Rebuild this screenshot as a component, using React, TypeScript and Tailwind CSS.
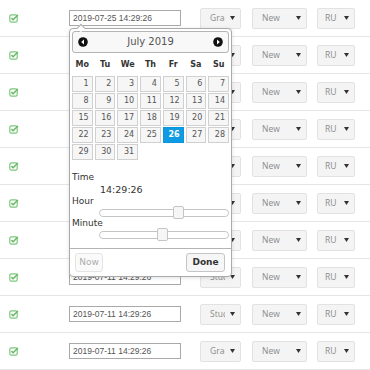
import React from "react";

type Row = { date: string; level: string };

const rows: Row[] = [
  { date: "2019-07-25 14:29:26", level: "Graduate" },
  { date: "2019-07-18 14:29:26", level: "Graduate" },
  { date: "2019-07-18 14:29:26", level: "Student" },
  { date: "2019-07-15 14:29:26", level: "Graduate" },
  { date: "2019-07-15 14:29:26", level: "Student" },
  { date: "2019-07-11 14:29:26", level: "Graduate" },
  { date: "2019-07-11 14:29:26", level: "Student" },
  { date: "2019-07-11 14:29:26", level: "Student" },
  { date: "2019-07-11 14:29:26", level: "Student" },
  { date: "2019-07-11 14:29:26", level: "Graduate" },
];

const weeks: (number | null)[][] = [
  [1, 2, 3, 4, 5, 6, 7],
  [8, 9, 10, 11, 12, 13, 14],
  [15, 16, 17, 18, 19, 20, 21],
  [22, 23, 24, 25, 26, 27, 28],
  [29, 30, 31, null, null, null, null],
];

const dayNames = ["Mo", "Tu", "We", "Th", "Fr", "Sa", "Su"];

function CheckSquare() {
  return (
    <svg width="10" height="10" viewBox="0 0 10 10" className="block">
      <rect x="0.8" y="1.8" width="7.4" height="7.4" rx="1.6" fill="none" stroke="#7cc77b" strokeWidth="1.2" />
      <path d="M2.4 5.1 L4.1 6.8 L8.9 2" fill="none" stroke="#64ba63" strokeWidth="1.5" />
    </svg>
  );
}

function Caret() {
  return (
    <svg width="5" height="4" viewBox="0 0 5 4" className="block shrink-0">
      <polygon points="0,0 5,0 2.5,4" fill="#333" />
    </svg>
  );
}

function Select({ value, width, textWidth, pl }: { value: string; width: string; textWidth: string; pl: string }) {
  return (
    <div
      className={`flex h-[21px] items-center justify-between rounded-[2px] border border-[#e2e2e2] bg-[#f4f4f4] pr-[5px] ${width} ${pl}`}
    >
      <span className={`overflow-hidden whitespace-nowrap text-[8.5px] leading-[12px] text-[#8a8a8a] ${textWidth}`}>
        {value}
      </span>
      <Caret />
    </div>
  );
}

function NavIcon({ dir }: { dir: "prev" | "next" }) {
  return (
    <svg width="10" height="10" viewBox="0 0 10 10" className="block">
      <circle cx="5" cy="5" r="4.8" fill="#111" />
      {dir === "prev" ? (
        <polygon points="6,2.6 6,7.4 3.2,5" fill="#fff" />
      ) : (
        <polygon points="4,2.6 4,7.4 6.8,5" fill="#fff" />
      )}
    </svg>
  );
}

function Slider({ handleLeft }: { handleLeft: string }) {
  return (
    <div className="relative ml-[27px] flex h-[13px] items-center">
      <div className="h-[8px] w-full rounded-[4px] border border-[#c5c5c5] bg-white" />
      <div
        className={`absolute top-0 h-[13px] w-[11px] rounded-[2px] border border-[#c5c5c5] bg-[#f6f6f6] ${handleLeft}`}
      />
    </div>
  );
}

function DatePicker() {
  return (
    <div
      className="absolute left-[69px] top-[28px] w-[163px] rounded-[4px] border border-[#aaaaaa] bg-white px-[2px] pt-[2px] shadow-[0_1px_4px_rgba(0,0,0,0.12)]"
      style={{ fontFamily: '"DejaVu Sans", Verdana, sans-serif' }}
    >
      <div className="absolute -top-[4px] left-[8px] h-[6px] w-[6px] rotate-45 border-l border-t border-[#aaaaaa] bg-white" />
      <div className="flex h-[22px] items-center justify-between rounded-[3px] border border-[#b4b4b4] bg-[#f8f8f8] pl-[5px] pr-[5px]">
        <NavIcon dir="prev" />
        <span className="text-[10px] leading-[12px] text-[#555]">July 2019</span>
        <NavIcon dir="next" />
      </div>
      <div className="grid h-[23px] grid-cols-7 items-center gap-x-[2px]">
        {dayNames.map((d) => (
          <span key={d} className="text-center text-[8px] font-bold leading-[10px] text-[#333]">
            {d}
          </span>
        ))}
      </div>
      <div className="grid grid-cols-7 gap-x-[2px] gap-y-[1px]">
        {weeks.flat().map((d, i) =>
          d === null ? (
            <div key={i} className="h-[16px]" />
          ) : d === 26 ? (
            <div
              key={i}
              className="flex h-[16px] items-center justify-end border border-[#0d95dc] bg-[#0f9be3] pr-[3px] text-[8px] font-bold leading-[10px] text-white"
            >
              {d}
            </div>
          ) : (
            <div
              key={i}
              className="flex h-[16px] items-center justify-end border border-[#d0d0d0] bg-[#f6f6f6] pr-[3px] text-[8px] leading-[10px] text-[#555]"
            >
              {d}
            </div>
          )
        )}
      </div>
      <div className="mt-[11px] flex h-[12px] items-center text-[9px] leading-[11px] text-[#333]">Time</div>
      <div className="flex h-[13px] items-center pl-[28px] text-[9.5px] leading-[12px] text-[#333]">14:29:26</div>
      <div className="flex h-[10px] items-center text-[9px] leading-[10px] text-[#333]">Hour</div>
      <Slider handleLeft="left-[74px]" />
      <div className="flex h-[9px] items-center text-[9px] leading-[9px] text-[#333]">Minute</div>
      <Slider handleLeft="left-[58px]" />
      <div className="-mx-[2px] mt-[7px] flex items-center justify-between border-t border-[#b4b4b4] px-[5px] pb-[4px] pt-[4px]">
        <button className="flex h-[19px] w-[28px] items-center justify-center rounded-[3px] border border-[#c5c5c5] bg-[#f6f6f6] text-[9px] leading-[11px] text-[#454545] opacity-45">
          Now
        </button>
        <button className="mr-[1px] flex h-[19px] w-[39px] items-center justify-center rounded-[3px] border border-[#c5c5c5] bg-[#f6f6f6] text-[9px] font-bold leading-[11px] text-[#333]">
          Done
        </button>
      </div>
    </div>
  );
}

export default function App() {
  return (
    <div
      className="relative h-[370px] w-[370px] overflow-hidden bg-white"
      style={{ fontFamily: '"Open Sans", "Liberation Sans", sans-serif' }}
    >
      {rows.map((r, i) => (
        <div key={i} className="flex h-[37px] items-center border-b border-[#e6e6e6]">
          <div className="w-[69px] pl-[9px]">
            <CheckSquare />
          </div>
          <div
            className="flex h-[16px] w-[112px] items-center border border-[#a9a9a9] bg-white pl-[3px] text-[8.5px] leading-[11px] text-[#555]"
            style={{ fontFamily: '"Liberation Sans", Arial, sans-serif' }}
          >
            {r.date}
          </div>
          <div className="ml-[19px]">
            <Select value={r.level} width="w-[41px]" textWidth="w-[15px]" pl="pl-[9px]" />
          </div>
          <div className="ml-[11px]">
            <Select value="New" width="w-[55px]" textWidth="w-[30px]" pl="pl-[9px]" />
          </div>
          <div className="ml-[10px]">
            <Select value="RU" width="w-[38px]" textWidth="w-[18px]" pl="pl-[7px]" />
          </div>
        </div>
      ))}
      <DatePicker />
    </div>
  );
}
